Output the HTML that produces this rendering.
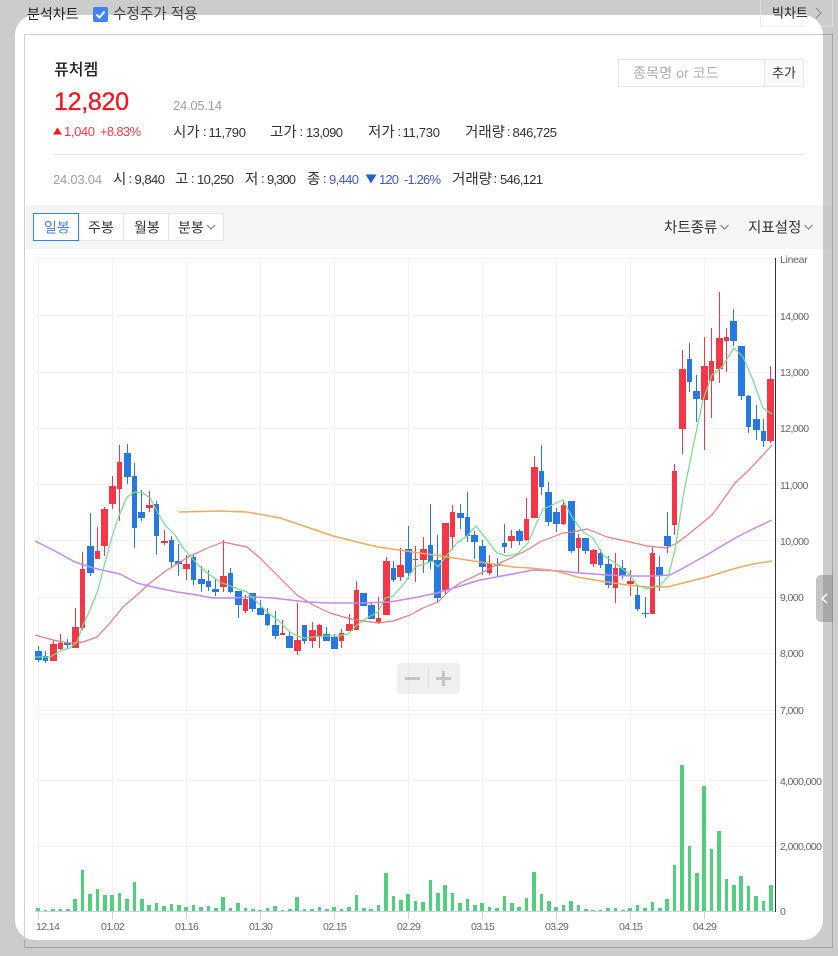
<!DOCTYPE html>
<html lang="ko"><head><meta charset="utf-8"><title>분석차트</title>
<style>
html,body{margin:0;padding:0;width:838px;height:956px;overflow:hidden;background:#ccc}
svg{display:block;position:absolute;left:0;top:0}
text{font-family:"Liberation Sans","Noto Sans CJK KR",sans-serif;font-size:14.5px;fill:#333;white-space:pre}
.n{font-size:13px}
.ax{font-size:10.5px;fill:#666;letter-spacing:-.6px}
.g{stroke:#f1f1f3;stroke-width:1;fill:none;shape-rendering:crispEdges}
.c{fill:none;shape-rendering:crispEdges}
.m{fill:none;stroke-width:1.2;stroke-linejoin:round}
</style></head><body>
<svg width="838" height="956" viewBox="0 0 838 956" xmlns="http://www.w3.org/2000/svg">
<!-- frame behind modal -->
<path d="M24.5 940V947.5H832.5V34.5H823" fill="none" stroke="#a3a3a6"/>
<rect x="760.5" y="-2" width="72" height="28" fill="none" stroke="#dedede"/>
<rect x="15" y="15" width="808" height="925" rx="20" ry="20" fill="#fff"/>
<path d="M823 34.5H24.5V940" fill="none" stroke="#cfcfdc"/>
<path d="M760.5 15V26H806" fill="none" stroke="#ececec"/>
<!-- top bar -->
<text x="27" y="19" style="font-size:14px;fill:#222">분석차트</text>
<rect x="93" y="7" width="15" height="15" rx="2" fill="#3d84ee"/>
<path d="M96.500 14.500l3 3 5-6" fill="none" stroke="#fff" stroke-width="2"/>
<text x="113" y="18.500" style="font-size:14.600px;fill:#444">수정주가 적용</text>
<text x="772" y="17.500" style="font-size:13px;fill:#222">빅차트</text>
<path d="M816 8l5 5-5 5" fill="none" stroke="#8a8a8a" stroke-width="1"/>
<!-- header -->
<text x="54" y="75" style="font-size:16px;fill:#222;font-weight:500">퓨처켐</text>
<text x="54" y="110" textLength="75" stroke="#f5151f" stroke-width=".3" style="font-size:25px;fill:#f5151f">12,820</text>
<text x="173" y="110" textLength="49" style="font-size:13px;fill:#a0a0a0">24.05.14</text>
<path d="M53 134.500L57.500 127.500L62 134.500Z" fill="#f5151f"/>
<text x="64" y="136" textLength="31" style="font-size:13px;fill:#f73b4a">1,040</text>
<text x="100" y="136" textLength="41" style="font-size:13px;fill:#f73b4a">+8.83%</text>
<text x="173" y="137">시가</text><text class="n" x="203" y="136">:</text><text class="n" x="208.500" y="137" textLength="37.500">11,790</text>
<text x="270" y="137">고가</text><text class="n" x="299.500" y="136">:</text><text class="n" x="306" y="137" textLength="37">13,090</text>
<text x="368" y="137">저가</text><text class="n" x="397.500" y="136">:</text><text class="n" x="402.500" y="137" textLength="37.500">11,730</text>
<text x="465" y="137">거래량</text><text class="n" x="507" y="136">:</text><text class="n" x="512.500" y="137" textLength="44.500">846,725</text>
<rect x="53" y="154" width="751" height="1" fill="#e6e6e6"/>
<text x="53" y="184" textLength="49" style="font-size:13px;fill:#a0a0a0">24.03.04</text>
<text x="113" y="184">시</text><text class="n" x="128.500" y="183">:</text><text class="n" x="134.500" y="184" textLength="30.500">9,840</text>
<text x="175" y="184">고</text><text class="n" x="191" y="183">:</text><text class="n" x="197" y="184" textLength="37">10,250</text>
<text x="245" y="184">저</text><text class="n" x="261" y="183">:</text><text class="n" x="267" y="184" textLength="29">9,300</text>
<text x="307" y="184">종</text><text class="n" x="323" y="183">:</text><text class="n" x="329" y="184" textLength="30" style="font-size:13px;fill:#3f57cf">9,440</text>
<path d="M365.500 174.500H376.500L371 183.500Z" fill="#2560c8"/>
<text x="379" y="184" textLength="20" style="font-size:13px;fill:#3f57cf">120</text>
<text x="404" y="184" textLength="37" style="font-size:13px;fill:#3f57cf">-1.26%</text>
<text x="452" y="184">거래량</text><text class="n" x="493.500" y="183">:</text><text class="n" x="500" y="184" textLength="43">546,121</text>
<!-- search -->
<rect x="618.500" y="59.500" width="185" height="27" fill="#fff" stroke="#e6e6e9"/>
<rect x="764.500" y="60" width="38.500" height="26" fill="#fafafa"/>
<path d="M764.500 60V87" stroke="#e6e6e9"/>
<text x="633" y="78" style="font-size:14.200px;fill:#aeaeae">종목명 or 코드</text>
<text x="772" y="77.500" style="font-size:13px;fill:#333">추가</text>
<!-- toolbar -->
<rect x="25" y="205" width="798" height="44" fill="#f5f5f5"/>
<rect x="823" y="205" width="9" height="44" fill="#c8c8c8"/>
<rect x="33.500" y="213.500" width="190" height="27" fill="#fff" stroke="#e6e6e9"/>
<path d="M123.500 214V241M168.500 214V241" stroke="#e6e6e9"/>
<rect x="33.500" y="213.500" width="45" height="27" fill="#fff" stroke="#2a88f2"/>
<text x="44" y="232.500" style="font-size:14px;fill:#4a7fe0">일봉</text>
<text x="88" y="232.500" style="font-size:14px">주봉</text><text x="134" y="232.500" style="font-size:14px">월봉</text><text x="178" y="232.500" style="font-size:14px">분봉</text>
<path d="M207 225l4 4 4-4M720.500 225l4 4 4-4M804.500 225l4 4 4-4" fill="none" stroke="#777"/>
<text x="664" y="232.500">차트종류</text><text x="748" y="232.500">지표설정</text>
<!-- grid -->
<path class="g" d="M38.500 259V710M112.500 259V710M186.500 259V710M260.500 259V710M334.500 259V710M408.500 259V710M482.500 259V710M556.500 259V710M630.500 259V710M704.500 259V710M38.500 714V911M112.500 714V911M186.500 714V911M260.500 714V911M334.500 714V911M408.500 714V911M482.500 714V911M556.500 714V911M630.500 714V911M704.500 714V911M35 258.500H775M35 315.500H775M35 372.500H775M35 428.500H775M35 484.500H775M35 540.500H775M35 597.500H775M35 653.500H775M35 710.500H775M35 714.500H775M35 780.500H775M35 846.500H775"/>
<!-- volume -->
<path class="c" stroke="#52cf7e" stroke-width="4" d="M38 908V911M53 909V911M68 909V911M75 899V911M90 894V911M105 895V911M112 895V911M127 899V911M142 899V911M149 905V911M164 906V911M179 905V911M186 907V911M201 907V911M216 908V911M223 897V911M238 903V911M253 909V911M260 910V911M275 906V911M290 909V911M297 897V911M312 909V911M327 909V911M334 907V911M349 907V911M364 908V911M371 909V911M386 873V911M401 900V911M408 894V911M423 902V911M438 893V911M445 885V911M460 903V911M475 905V911M482 903V911M497 908V911M512 903V911M519 907V911M534 872V911M549 901V911M556 907V911M571 901V911M586 909V911M593 910V911M608 908V911M623 910V911M630 908V911M645 908V911M660 908V911M667 899V911M682 765V911M697 873V911M704 786V911M719 831V911M734 885V911M741 876V911M756 896V911M771 885V911"/>
<path class="c" stroke="#52cf7e" stroke-width="3" d="M45.500 910V911M60.500 909V911M82.500 870V911M97.500 889V911M119.500 893V911M134.500 882V911M156.500 903V911M171.500 904V911M193.500 905V911M208.500 906V911M230.500 908V911M245.500 908V911M267.500 908V911M282.500 910V911M304.500 909V911M319.500 907V911M341.500 909V911M356.500 895V911M378.500 905V911M393.500 896V911M415.500 901V911M430.500 880V911M452.500 893V911M467.500 899V911M489.500 907V911M504.500 896V911M526.500 898V911M541.500 894V911M563.500 905V911M578.500 905V911M600.500 910V911M615.500 908V911M637.500 905V911M652.500 902V911M674.500 865V911M689.500 846V911M711.500 849V911M726.500 879V911M748.500 886V911M763.500 901V911"/>
<path d="M35 911.500H775" stroke="#c5d2e8" fill="none"/>
<path class="c" stroke="#c5d2e8" d="M38.500 912V919M112.500 912V919M186.500 912V919M260.500 912V919M334.500 912V919M408.500 912V919M482.500 912V919M556.500 912V919M630.500 912V919M704.500 912V919"/>
<!-- candles -->
<path class="c" stroke="#f53647" stroke-width="1" d="M53.500 640V661M60.500 634V650M75.500 608V648M82.500 552V630M97.500 527V559M104.500 507V556M112.500 476V509M119.500 445V521M149.500 491V512M164.500 530V545M186.500 555V580M223.500 540V592M245.500 595V613M282.500 620V635M297.500 603V655M312.500 622V648M319.500 624V648M341.500 629V648M349.500 614V631M356.500 581V630M378.500 597V624M386.500 557V615M400.500 548V581M415.500 546V582M423.500 537V573M445.500 523V595M452.500 505V550M489.500 555V575M511.500 530V548M526.500 498V541M534.500 456V518M563.500 500V525M578.500 534V572M593.500 549V567M615.500 553V603M630.500 570V596M652.500 546V614M674.500 464V535M682.500 350V454M704.500 337V450M711.500 328V418M719.500 292V383M726.500 328V372M770.500 366V443"/>
<path class="c" stroke="#2779e2" stroke-width="1" d="M38.500 646V662M45.500 651V663M67.500 639V648M90.500 513V576M127.500 444V484M134.500 463V548M141.500 490V521M156.500 501V555M171.500 536V567M178.500 544V576M193.500 554V585M201.500 566V592M208.500 570V591M215.500 579V596M230.500 568V593M238.500 591V618M252.500 593V612M260.500 600V615M267.500 608V626M275.500 611V639M289.500 631V648M304.500 625V644M326.500 627V641M334.500 634V649M363.500 593V606M371.500 603V619M393.500 561V582M408.500 526V579M430.500 504V569M437.500 535V602M460.500 504V529M467.500 492V542M474.500 531V559M482.500 540V575M497.500 558V577M504.500 524V553M519.500 529V545M541.500 445V495M548.500 482V526M556.500 508V532M571.500 501V553M585.500 538V554M600.500 549V568M608.500 556V588M622.500 560V579M637.500 586V611M645.500 597V618M659.500 556V591M667.500 512V553M689.500 343V392M696.500 375V422M733.500 309V346M741.500 346V400M748.500 395V433M756.500 405V440M763.500 419V447"/>
<path class="c" stroke="#2779e2" stroke-width="7" d="M38.500 651V660M67.500 643V645M90.500 546V573M127.500 453V477M141.500 512V518M178.500 561V564M201.500 579V584M215.500 589V592M238.500 591V605M252.500 593V609M260.500 608V615M275.500 625V636M289.500 636V648M326.500 634V641M334.500 637V649M363.500 593V606M371.500 605V619M408.500 549V573M437.500 560V598M460.500 513V518M474.500 535V542M482.500 546V567M497.500 564V566M519.500 531V541M548.500 492V522M556.500 512V524M571.500 501V551M585.500 538V551M608.500 564V585M622.500 568V575M645.500 613V614M659.500 567V576M667.500 536V546M696.500 391V399M733.500 321V341M741.500 346V396M756.500 419V430"/>
<path class="c" stroke="#2779e2" stroke-width="5" d="M45.500 656V661M134.500 476V528M156.500 504V536M171.500 540V562M193.500 557V580M208.500 581V587M230.500 573V592M267.500 614V625M304.500 625V641M393.500 568V580M430.500 545V562M467.500 517V536M504.500 543V547M541.500 471V487M600.500 553V565M637.500 595V609M689.500 359V382M748.500 396V427M763.500 431V441"/>
<path class="c" stroke="#f53647" stroke-width="7" d="M53.500 644V661M75.500 627V648M104.500 509V546M112.500 486V504M149.500 505V508M164.500 541V543M186.500 564V569M223.500 576V587M297.500 640V651M312.500 630V641M349.500 624V631M386.500 561V615M400.500 565V577M423.500 549V560M445.500 523V590M511.500 536V541M534.500 467V518M593.500 550V564M630.500 581V584M682.500 369V429M704.500 366V400M719.500 338V369M770.500 379V441"/>
<path class="c" stroke="#f53647" stroke-width="5" d="M60.500 643V649M82.500 569V628M97.500 551V559M119.500 462V489M245.500 599V611M282.500 633V635M319.500 625V636M341.500 633V641M356.500 590V630M378.500 618V622M415.500 559V560M452.500 512V537M489.500 563V573M526.500 519V540M563.500 505V524M578.500 538V548M615.500 568V588M652.500 553V614M674.500 471V525M711.500 361V381M726.500 337V341"/>
<!-- moving averages -->
<polyline class="m" stroke="#e97c7c" points="35,635 53,640 70,643 83,642 97,637 110,623 123,607 137,595 150,583 167,570 190,556 210,547 223,542 247,547 260,558 277,575 297,595 313,605 330,613 347,618 363,621 378,623 393,621 410,615 423,608 438,602 450,590 460,583 477,575 487,570 500,563 513,557 527,550 540,542 550,538 563,533 573,532 587,529 595,532 607,537 630,542 647,546 667,548 677,543 690,533 712,515 723,500 735,483 747,472 763,455 772,445"/>
<polyline class="m" style="stroke-width:1.5" stroke="#c489f5" points="35,541 53,550 75,562 93,568 120,574 137,583 153,587 177,592 197,595 213,598 233,598 253,597 273,598 307,602 330,603 363,603 390,602 413,598 437,593 457,587 480,580 507,575 533,570 560,571 580,573 607,575 633,576 653,576 670,575 687,566 710,553 737,537 757,527 772,520"/>
<polyline class="m" style="stroke-width:1.5" stroke="#f2a95f" points="179,512 220,511 247,512 280,518 307,527 333,536 357,542 378,547 413,552 447,557 480,562 513,567 530,568 550,570 560,572 577,577 607,582 627,585 647,587 667,587 683,583 707,577 733,569 753,564 772,561"/>
<polyline class="m" stroke="#74dd8b" points="35,657 50,657 60,651 70,648 77,642 83,625 90,610 98,590 103,570 112,537 118,518 127,497 135,492 143,493 150,498 158,513 165,525 175,535 183,548 192,558 200,567 210,575 220,582 233,587 247,592 255,600 267,612 280,622 290,632 300,637 305,638 313,637 323,636 337,636 348,634 357,625 367,618 378,612 385,598 393,596 403,585 415,567 427,563 432,561 438,567 447,555 457,543 467,536 476,526 483,535 497,553 507,556 517,554 528,543 537,522 543,509 548,507 563,500 572,517 583,532 593,538 603,555 615,563 628,573 637,585 647,589 660,585 668,577 675,550 683,497 693,447 703,400 712,375 722,367 734,348 743,357 753,380 763,408 772,414"/>
<!-- axis -->
<path d="M775.500 258V912" stroke="#333" fill="none"/>
<text class="ax" x="780" y="263" style="font-size:10.500px;fill:#666;letter-spacing:-.3px">Linear</text>
<text class="ax" x="780" y="320">14,000</text><text class="ax" x="780" y="376">13,000</text><text class="ax" x="780" y="432">12,000</text><text class="ax" x="780" y="489">11,000</text><text class="ax" x="780" y="545">10,000</text><text class="ax" x="780" y="601">9,000</text><text class="ax" x="780" y="657">8,000</text><text class="ax" x="780" y="714">7,000</text>
<text class="ax" x="780" y="785">4,000,000</text><text class="ax" x="780" y="850">2,000,000</text><text class="ax" x="780" y="915">0</text>
<text class="ax" x="36" y="930">12.14</text><text class="ax" x="101" y="930">01.02</text><text class="ax" x="175" y="930">01.16</text><text class="ax" x="249" y="930">01.30</text><text class="ax" x="323" y="930">02.15</text><text class="ax" x="397" y="930">02.29</text><text class="ax" x="471" y="930">03.15</text><text class="ax" x="545" y="930">03.29</text><text class="ax" x="619" y="930">04.15</text><text class="ax" x="693" y="930">04.29</text>
<!-- zoom control -->
<rect x="397" y="663" width="63" height="31" rx="4" fill="#e4e4e4" fill-opacity=".6"/>
<path d="M405 678.500H420M436 678.500H451M443.500 671V686" stroke="#c4c4c4" stroke-width="3" fill="none"/>
<path d="M428.500 668V688" stroke="#dcdcdc" fill="none"/>
<!-- side handle -->
<path d="M833 575H821a5 5 0 0 0-5 5V617a5 5 0 0 0 5 5H833Z" fill="rgb(124,124,128)" fill-opacity=".45"/>
<path d="M827 594l-5 4.500 5 4.500" fill="none" stroke="#fff" stroke-width="1.500"/>
</svg>
</body></html>
